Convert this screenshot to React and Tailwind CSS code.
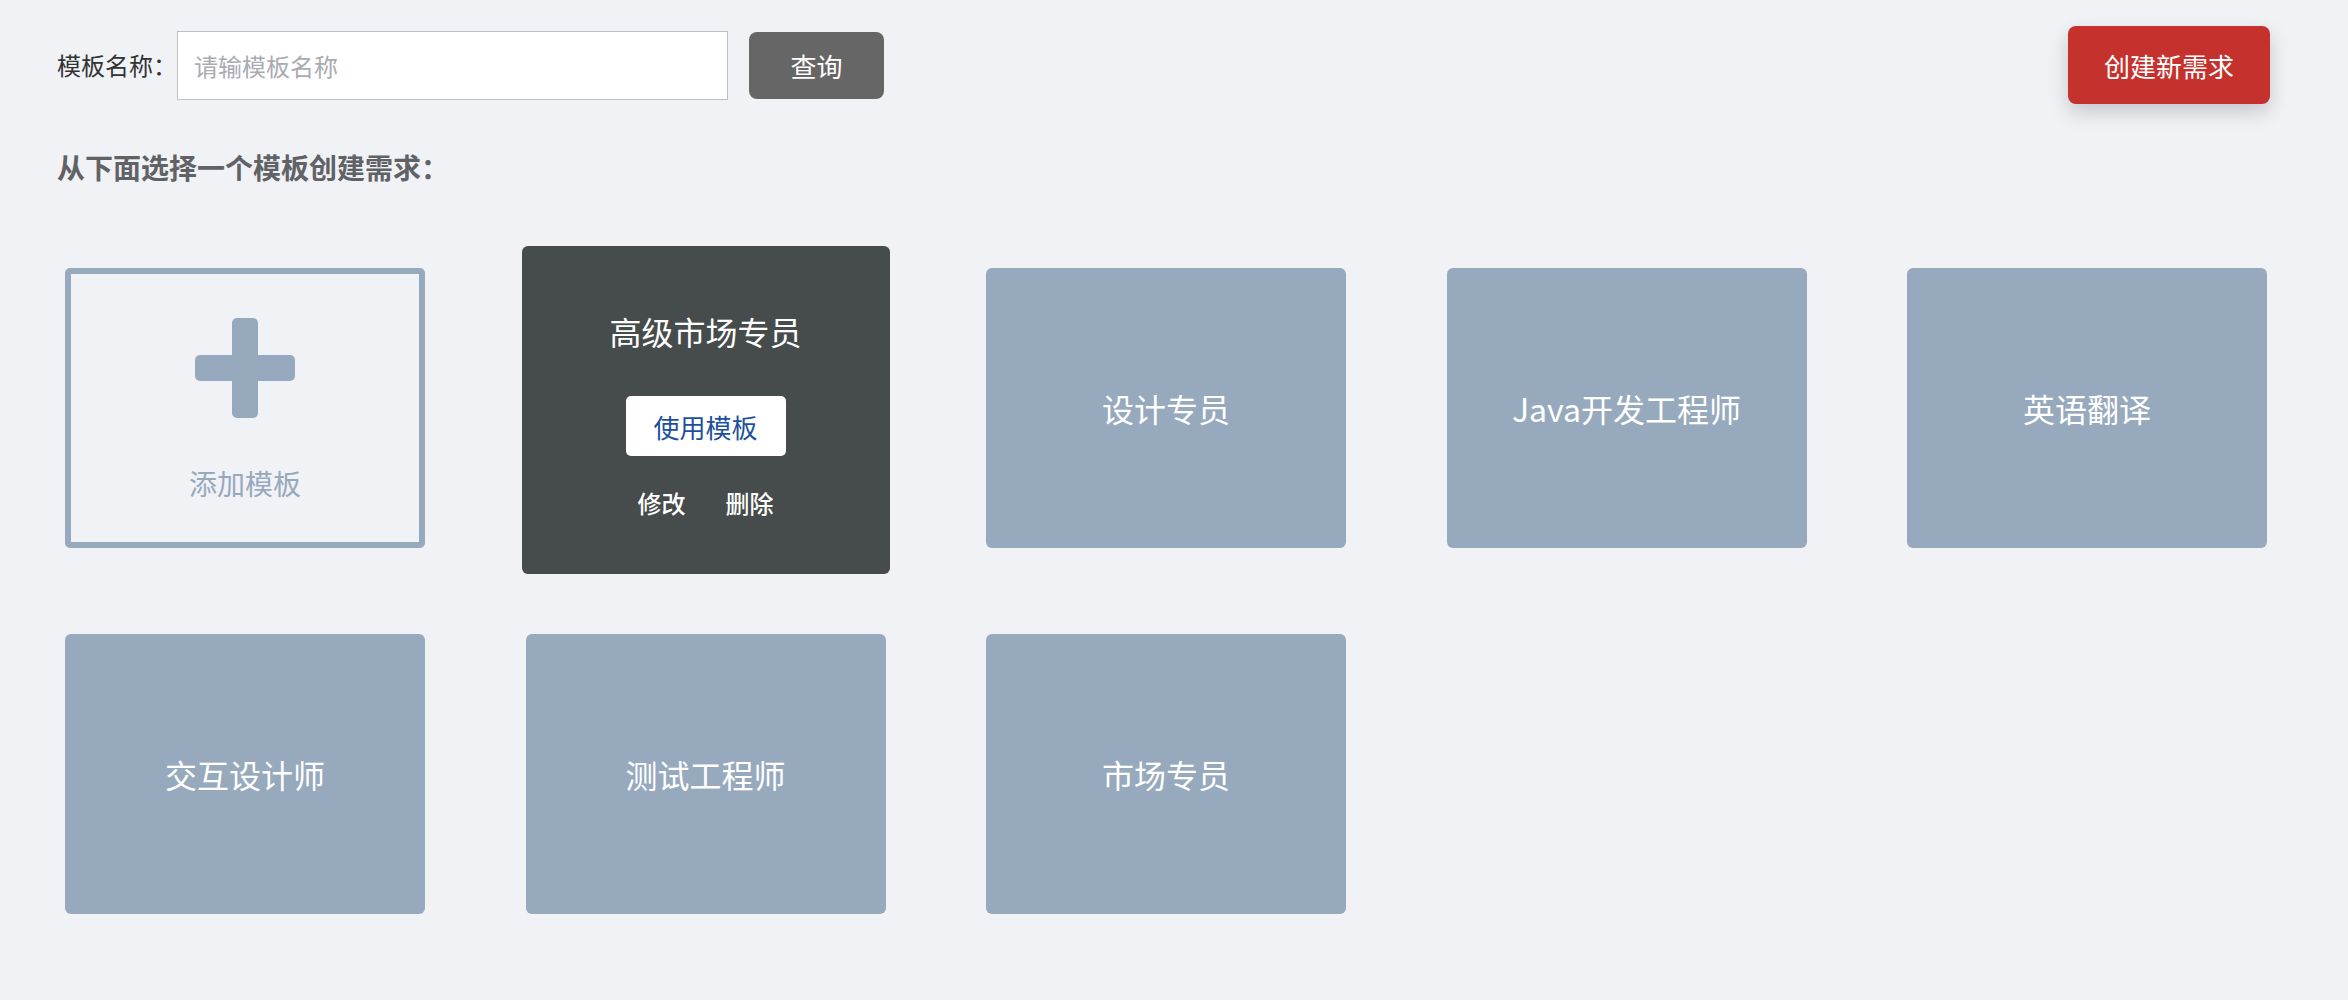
import React, { useState } from 'react';

const templates = ['高级市场专员', '设计专员', 'Java开发工程师', '英语翻译', '交互设计师', '测试工程师', '市场专员'];

const PlusMark = () => (
    <svg width="100" height="100" viewBox="0 0 100 100" className="block">
        <rect x="37" y="0" width="26" height="100" rx="5" fill="#97a9bd" />
        <rect x="0" y="37" width="100" height="26" rx="5" fill="#97a9bd" />
    </svg>
);

const TemplateCard = ({ name, active, onEnter }) => (
    <div className="relative h-[280px]" onMouseEnter={onEnter}>
        {active ? (
            // expanded card with actions
            <div className="absolute -left-1 -right-1 -top-[22px] -bottom-[26px] z-10 flex flex-col items-center rounded-[6px] bg-[#464b4c] pt-[63px]">
                <div className="text-[32px] leading-[44px] text-white">{name}</div>
                <button className="mt-[43px] flex h-[60px] w-[160px] items-center justify-center rounded-[5px] bg-white text-[26px] text-[#1d4f9c]">
                    使用模板
                </button>
                <div className="mt-[31px] flex gap-10 text-[24px] leading-[32px] font-medium text-white">
                    <span>修改</span>
                    <span>删除</span>
                </div>
            </div>
        ) : (
            <div className="flex h-full items-center justify-center rounded-[6px] bg-[#97a9bd] text-[32px] text-white">
                {name}
            </div>
        )}
    </div>
);

export default function App() {
    const [hovered, setHovered] = useState(0);

    return (
        <div className="min-h-[1000px] bg-[#f0f2f6] pl-[57px] pr-[78px] pt-[26px] text-[#333] font-['Noto_Sans_CJK_SC','Noto_Sans',sans-serif]">
            {/* --- search bar + create button --- */}
            <div className="flex items-center justify-between">
                <div className="flex items-center">
                    <span className="text-[24px] leading-[32px] text-[#333]">模板名称：</span>
                    <input
                        placeholder="请输模板名称"
                        className="h-[69px] w-[551px] border border-[#bcc0c8] bg-white pl-4 text-[24px] text-[#333] outline-none placeholder:text-[#a8abb2]"
                    />
                    <button className="ml-[21px] flex h-[67px] w-[135px] items-center justify-center rounded-[8px] bg-[#666666] text-[26px] text-white">
                        查询
                    </button>
                </div>
                <button className="flex h-[78px] w-[202px] items-center justify-center rounded-[8px] bg-[#c5322e] text-[26px] text-white shadow-[0_8px_20px_rgba(0,0,0,0.18)]">
                    创建新需求
                </button>
            </div>

            <div className="mt-[43px] text-[28px] leading-[40px] font-bold text-[#606266]">从下面选择一个模板创建需求：</div>

            {/* --- template grid --- */}
            <div className="mt-[81px] grid grid-cols-[repeat(5,360px)] gap-x-[100.5px] gap-y-[86px] pl-[8px]">
                <div className="flex h-[280px] flex-col items-center rounded-[5px] border-[6px] border-[#97a9bd] pt-[44px]">
                    <PlusMark />
                    <div className="mt-[45px] text-[28px] leading-[40px] text-[#97a9bd]">添加模板</div>
                </div>
                {templates.map((name, i) => (
                    <TemplateCard key={name} name={name} active={hovered === i} onEnter={() => setHovered(i)} />
                ))}
            </div>
        </div>
    );
}
